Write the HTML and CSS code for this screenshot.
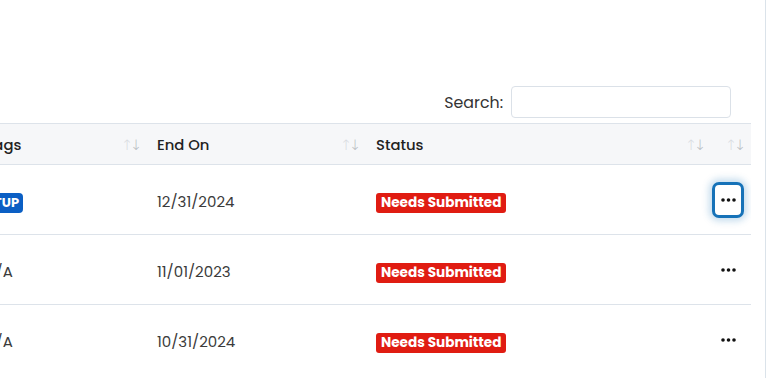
FILE: index.html
```html
<!DOCTYPE html>
<html>
<head>
<meta charset="utf-8">
<link rel="stylesheet" href="styles.css">
</head>
<body>
<div class="frame">
  <div class="panel">
    <div class="toolbar">
      <label class="search">Search: <input type="text" class="search-input"></label>
    </div>
    <div class="table-clip">
      <table class="grid">
        <colgroup>
          <col class="c-tags"><col class="c-end"><col class="c-status"><col class="c-act">
        </colgroup>
        <thead>
          <tr>
            <th><div class="th-in"><span>Tags</span><span class="sort"><i class="up">↑</i><i class="dn">↓</i></span></div></th>
            <th><div class="th-in"><span>End On</span><span class="sort"><i class="up">↑</i><i class="dn">↓</i></span></div></th>
            <th><div class="th-in"><span>Status</span><span class="sort"><i class="up">↑</i><i class="dn">↓</i></span></div></th>
            <th><div class="th-in th-end"><span class="sort"><i class="up">↑</i><i class="dn">↓</i></span></div></th>
          </tr>
        </thead>
        <tbody>
          <tr>
            <td><span class="tag">SETUP</span></td>
            <td>12/31/2024</td>
            <td><span class="status">Needs Submitted</span></td>
            <td class="act"><button class="dots focused" aria-label="More"><svg width="15" height="4" viewBox="0 0 15 4"><circle cx="2" cy="2" r="1.8"/><circle cx="7.5" cy="2" r="1.8"/><circle cx="13" cy="2" r="1.8"/></svg></button></td>
          </tr>
          <tr>
            <td>N/A</td>
            <td>11/01/2023</td>
            <td><span class="status">Needs Submitted</span></td>
            <td class="act"><button class="dots" aria-label="More"><svg width="15" height="4" viewBox="0 0 15 4"><circle cx="2" cy="2" r="1.8"/><circle cx="7.5" cy="2" r="1.8"/><circle cx="13" cy="2" r="1.8"/></svg></button></td>
          </tr>
          <tr>
            <td>N/A</td>
            <td>10/31/2024</td>
            <td><span class="status">Needs Submitted</span></td>
            <td class="act"><button class="dots" aria-label="More"><svg width="15" height="4" viewBox="0 0 15 4"><circle cx="2" cy="2" r="1.8"/><circle cx="7.5" cy="2" r="1.8"/><circle cx="13" cy="2" r="1.8"/></svg></button></td>
          </tr>
        </tbody>
      </table>
    </div>
  </div>
  <div class="rail"></div>
</div>
</body>
</html>
```
FILE: styles.css
```css
* { box-sizing: border-box; }
html, body { margin: 0; padding: 0; background: #fff; }
body {
  font-family: "Poppins", "Open Sans", "DejaVu Sans", sans-serif;
  color: #3b3b3b;
  width: 768px;
  height: 378px;
  overflow: hidden;
}
.frame {
  display: flex;
  height: 378px;
}
.panel {
  width: 751px;
  flex: none;
  overflow: hidden;
}
.rail {
  margin-left: 14px;
  width: 1px;
  background: #dbe3ea;
  flex: none;
}
.toolbar {
  display: flex;
  justify-content: flex-end;
  padding: 86px 20px 5px 0;
}
.search {
  display: flex;
  align-items: center;
  gap: 8px;
  font-size: 15.8px;
  color: #333;
}
.search-input {
  width: 220px;
  height: 32px;
  border: 1px solid #dbe1e8;
  border-radius: 4px;
  background: #fff;
  outline: none;
}
.table-clip {
  margin-left: -25px;
}
.grid {
  border-collapse: collapse;
  table-layout: fixed;
  width: 776px;
}
.c-tags { width: 172px; }
.c-end { width: 219px; }
.c-status { width: 345px; }
.c-act { width: 40px; }
.grid thead th {
  background: #f6f7f9;
  border-top: 1px solid #dde3ea;
  border-bottom: 1px solid #dde3ea;
  height: 41px;
  padding: 2px 10px 0 10px;
  font-weight: 500;
  font-size: 14.8px;
  color: #222;
  text-align: left;
}
.th-in {
  display: flex;
  align-items: center;
  justify-content: space-between;
}
.th-end { justify-content: flex-end; }
.sort {
  display: flex;
  font-size: 14.5px;
  font-family: "DejaVu Sans", sans-serif;
  font-weight: 300;
  letter-spacing: -3px;
  margin-right: -2px;
}
.sort i { font-style: normal; }
.sort .up { color: #d7dadf; }
.sort .dn { color: #b8bcc2; }
.grid tbody td {
  height: 70px;
  padding: 3px 10px 0 10px;
  border-bottom: 1px solid #dde3ea;
  font-size: 15px;
  color: #3b3b3b;
  vertical-align: middle;
}
.grid tbody tr:last-child td { border-bottom: none; }
.tag {
  display: inline-block;
  background: #0b5fc4;
  color: #fff;
  font-weight: 700;
  font-size: 13px;
  line-height: 20px;
  padding: 0 4px;
  margin-left: -10px;
  border-radius: 4px;
}
.status {
  display: inline-block;
  background: #e01c12;
  color: #fff;
  font-weight: 700;
  font-size: 13.6px;
  line-height: 20px;
  padding: 0 5px;
  border-radius: 3px;
}
.act { text-align: center; }
.grid tbody td.act { padding: 0; }
.dots {
  width: 32px;
  height: 36px;
  border: 3px solid transparent;
  border-radius: 7px;
  background: #fff;
  display: inline-flex;
  align-items: center;
  justify-content: center;
  padding: 0;
  margin-left: -6px;
}
.dots svg { fill: #111; }
.dots.focused {
  border-color: #1672b8;
  box-shadow: 0 0 7px 3px rgba(22, 114, 184, 0.25);
}
```
